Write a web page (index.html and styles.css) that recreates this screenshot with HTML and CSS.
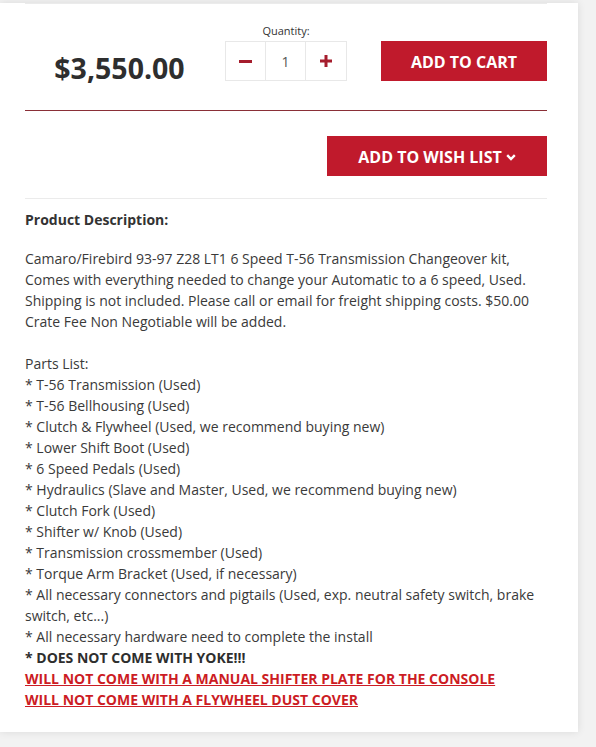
FILE: index.html
```html
<!DOCTYPE html>
<html lang="en">
<head>
<meta charset="utf-8">
<title>Product</title>
<link rel="stylesheet" href="styles.css">
</head>
<body>
<div class="card">
  <div class="rule-light rule-top"></div>
  <div class="buy-row">
    <div class="price">$3,550.00</div>
    <div class="qty-group">
      <div class="qty-label">Quantity:</div>
      <div class="qty-box">
        <button class="qty-btn" aria-label="Decrease">
          <svg width="13" height="3" viewBox="0 0 13 3"><rect width="13" height="3" fill="#a51d2d"/></svg>
        </button>
        <div class="qty-val">1</div>
        <button class="qty-btn qty-btn-last" aria-label="Increase">
          <svg width="12" height="12" viewBox="0 0 12 12"><rect x="0" y="4.5" width="12" height="3" fill="#a51d2d"/><rect x="4.5" y="0" width="3" height="12" fill="#a51d2d"/></svg>
        </button>
      </div>
    </div>
    <button class="btn btn-cart">ADD TO CART</button>
  </div>
  <div class="rule-red"></div>
  <div class="wish-row">
    <button class="btn btn-wish">ADD TO WISH LIST
      <svg class="chev" width="10" height="7" viewBox="0 0 10 7"><polyline points="1.2,1.2 5,5 8.8,1.2" fill="none" stroke="#fff" stroke-width="2.4"/></svg>
    </button>
  </div>
  <div class="rule-light rule-desc"></div>
  <div class="desc">
    <h3 class="desc-title">Product Description:</h3>
    <p class="desc-p">Camaro/Firebird 93-97 Z28 LT1 6 Speed T-56 Transmission Changeover kit,<br>Comes with everything needed to change your Automatic to a 6 speed, Used. Shipping is not included. Please call or email for freight shipping costs. $50.00 Crate Fee Non Negotiable will be added.</p>
    <p class="desc-p">Parts List:<br>
* T-56 Transmission (Used)<br>
* T-56 Bellhousing (Used)<br>
* Clutch &amp; Flywheel (Used, we recommend buying new)<br>
* Lower Shift Boot (Used)<br>
* 6 Speed Pedals (Used)<br>
* Hydraulics (Slave and Master, Used, we recommend buying new)<br>
* Clutch Fork (Used)<br>
* Shifter w/ Knob (Used)<br>
* Transmission crossmember (Used)<br>
* Torque Arm Bracket (Used, if necessary)<br>
* All necessary connectors and pigtails (Used, exp. neutral safety switch, brake switch, etc...)<br>
* All necessary hardware need to complete the install<br>
<strong class="strong">* DOES NOT COME WITH YOKE!!!</strong><br>
<strong class="warn">WILL NOT COME WITH A MANUAL SHIFTER PLATE FOR THE CONSOLE</strong><br>
<strong class="warn">WILL NOT COME WITH A FLYWHEEL DUST COVER</strong></p>
  </div>
</div>
</body>
</html>
```

FILE: styles.css
```css
html, body {
  margin: 0;
  padding: 0;
}
body {
  background: #f2f2f2;
  font-family: "Open Sans", "Liberation Sans", sans-serif;
  color: #3a3a3a;
  width: 596px;
  height: 747px;
  overflow: hidden;
}
.card {
  width: 578px;
  box-sizing: border-box;
  background: #fff;
  padding: 0 31px 22px 25px;
  box-shadow: 0 0 8px rgba(0, 0, 0, 0.10);
}
.rule-light {
  height: 1px;
  background: #ebebeb;
}
.rule-top {
  margin-top: 3px;
}
.buy-row {
  display: flex;
  align-items: flex-end;
  padding-top: 19px;
}
.price {
  width: 189px;
  text-align: center;
  font-size: 28.5px;
  font-weight: 700;
  line-height: 40px;
  color: #2e2e2e;
  margin-bottom: -7px;
}
.qty-group {
  margin-left: 11px;
  display: flex;
  flex-direction: column;
  align-items: center;
}
.qty-label {
  font-size: 11px;
  line-height: 16px;
  margin-bottom: 2px;
  color: #333;
}
.qty-box {
  display: flex;
  border: 1px solid #e8e8e8;
  height: 38px;
}
.qty-btn {
  width: 40px;
  height: 38px;
  padding: 0;
  margin: 0;
  border: 0;
  border-right: 1px solid #e8e8e8;
  background: #fff;
  display: flex;
  align-items: center;
  justify-content: center;
}
.qty-btn-last {
  border-right: 0;
}
.qty-val {
  width: 39px;
  border-right: 1px solid #e8e8e8;
  display: flex;
  align-items: center;
  justify-content: center;
  font-size: 14px;
  color: #555;
}
.btn {
  font-family: "Open Sans", "Liberation Sans", sans-serif;
  font-weight: 700;
  font-size: 16px;
  color: #fff;
  background: #c01a2c;
  border: 0;
  padding: 0;
  margin: 0;
  height: 40px;
  display: flex;
  align-items: center;
  justify-content: center;
}
.btn-cart {
  margin-left: 34px;
  width: 166px;
  padding-top: 1px;
}
.rule-red {
  margin-top: 29px;
  height: 1px;
  background: #8a2f37;
}
.wish-row {
  display: flex;
  justify-content: flex-end;
  margin-top: 25px;
}
.btn-wish {
  width: 220px;
  gap: 4px;
  padding-top: 1px;
}
.chev {
  margin-top: 1px;
}
.rule-desc {
  margin-top: 22px;
}
.desc {
  font-size: 14px;
  line-height: 21px;
}
.desc-title {
  margin: 10px 0 18px;
  font-size: 14px;
  line-height: 21px;
  font-weight: 700;
  color: #333;
}
.desc-p {
  margin: 0 0 21px;
}
.desc-p:last-child {
  margin-bottom: 0;
}
.strong {
  font-weight: 700;
  color: #2e2e2e;
}
.warn {
  font-weight: 700;
  color: #cc1c24;
  text-decoration: underline;
}
```
